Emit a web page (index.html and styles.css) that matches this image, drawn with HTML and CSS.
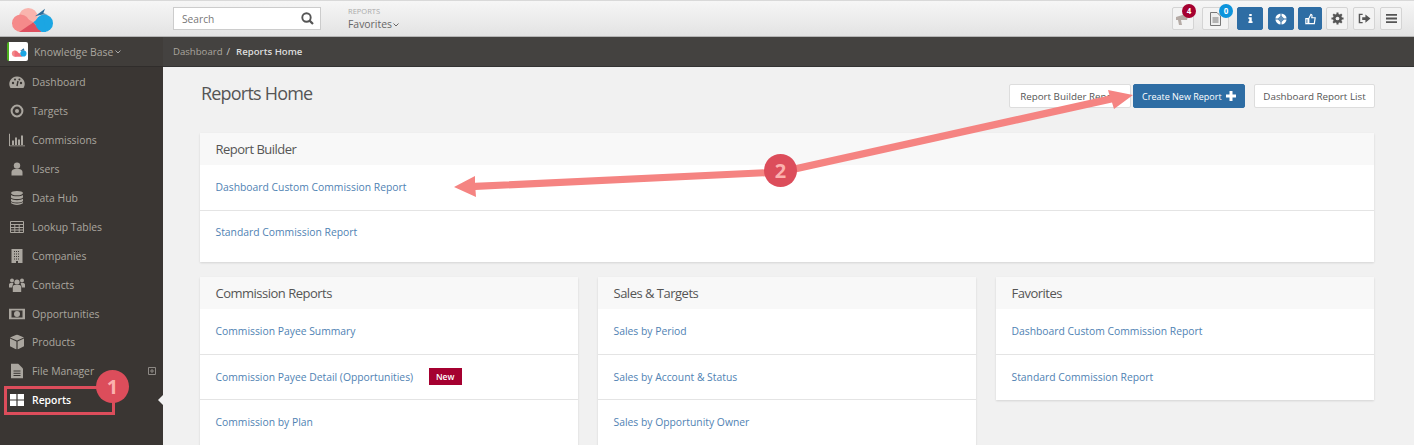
FILE: index.html
```html
<!DOCTYPE html>
<html lang="en">
<head>
  <meta charset="UTF-8" />
  <meta name="viewport" content="width=device-width, initial-scale=1.0"/>
  <title>Reports Home</title>
  <link rel="stylesheet" href="styles.css">
</head>
<body>

<!-- Top bar -->
<header class="topbar">
  <div class="logo-wrap">
    <svg class="logo" width="44" height="28" viewBox="0 0 44 28">
      <circle cx="18.3" cy="12.2" r="9.3" fill="#f9b4ad"/>
      <circle cx="10.7" cy="18.2" r="8.7" fill="#f58a8a"/>
      <path d="M10 9.5 L23.3 17.2 L9.3 27Z" fill="#f58a8a"/>
      <path d="M9.3 27 L23.3 17.2 L31.7 27Z" fill="#dd5060"/>
      <circle cx="34.3" cy="18.2" r="8.7" fill="#1ba6e3"/>
      <path d="M23.3 17.2 L33 9.5 L36 27 L31.7 27Z" fill="#1ba6e3"/>
      <path d="M25 11.2 L35 3.8 L33.3 8.2 L37.7 9.5 L32.7 9.5Z" fill="#2a6d9c"/>
    </svg>
  </div>
  <div class="search-box">
    <span class="search-text">Search</span>
    <svg width="13" height="13" viewBox="0 0 13 13"><circle cx="5.5" cy="5.5" r="4.2" fill="none" stroke="#555" stroke-width="1.9"/><path d="M8.6 8.6 L12 12" stroke="#555" stroke-width="2.2"/></svg>
  </div>
  <div class="fav-menu">
    <div class="fav-label">REPORTS</div>
    <div class="fav-value">Favorites<svg class="caret" width="6" height="4" viewBox="0 0 6 4"><path d="M0.5 0.5 L3 3 L5.5 0.5" fill="none" stroke="#666" stroke-width="1"/></svg></div>
  </div>
  <div class="top-actions">
    <span class="tool tool-bell">
      <svg width="16" height="14" viewBox="0 0 16 14"><path d="M1 5 L14 1 L12 8 L6 8 L7 13 L4 13 L3 8 L1 8Z" fill="#b5aba6"/></svg>
      <b class="count count-red">4</b>
    </span>
    <span class="tool tool-doc">
      <svg width="11" height="14" viewBox="0 0 11 14"><path d="M0.5 0.5 H7 L10.5 4 V13.5 H0.5Z" fill="#eee" stroke="#777"/><path d="M2.5 6 H8.5 M2.5 8 H8.5 M2.5 10 H8.5" stroke="#777"/></svg>
      <b class="count count-blue">0</b>
    </span>
    <span class="tool tool-blue">
      <svg width="5" height="9" viewBox="0 0 6 11"><path d="M1.5 0 H4.5 V2.5 H1.5Z M0.5 4 H4.5 V9 H5.5 V11 H0.5 V9 H1.5 V6 H0.5Z" fill="#fff"/></svg>
    </span>
    <span class="tool tool-blue">
      <svg width="12" height="12" viewBox="0 0 12 12"><circle cx="6" cy="6" r="5.6" fill="#fff"/><path d="M6 0 V12 M0 6 H12" stroke="#2e6da4" stroke-width="1"/><circle cx="6" cy="6" r="2.2" fill="none" stroke="#2e6da4"/></svg>
    </span>
    <span class="tool tool-blue tool-thumb">
      <svg width="11" height="12" viewBox="0 0 13 13"><path d="M1 6 H3.5 V12 H1Z M4.5 6 L7 1 C8.5 1 8.5 3 8 5 H12 L11 12 H4.5Z" fill="none" stroke="#fff" stroke-width="1.4"/></svg>
    </span>
    <span class="tool tool-sq">
      <svg width="13" height="13" viewBox="0 0 14 14"><circle cx="7" cy="7" r="3.6" fill="none" stroke="#555" stroke-width="2.6"/><path d="M7 0.5 V13.5 M0.5 7 H13.5 M2.4 2.4 L11.6 11.6 M11.6 2.4 L2.4 11.6" stroke="#555" stroke-width="2.2"/><circle cx="7" cy="7" r="2" fill="#eee"/></svg>
    </span>
    <span class="tool tool-sq">
      <svg width="13" height="11" viewBox="0 0 14 12"><path d="M5 1.5 H1.5 V10.5 H5" fill="none" stroke="#555" stroke-width="1.6"/><path d="M4.5 4.5 H8 V1.5 L13.5 6 L8 10.5 V7.5 H4.5Z" fill="#555"/></svg>
    </span>
    <span class="tool tool-sq">
      <svg width="13" height="11" viewBox="0 0 14 12"><path d="M1 2 H13 M1 6 H13 M1 10 H13" stroke="#555" stroke-width="2"/></svg>
    </span>
  </div>
</header>

<div class="layout">

  <!-- Sidebar -->
  <aside class="sidebar">
    <div class="kb-row">
      <span class="kb-logo">
        <svg width="16" height="10" viewBox="0 0 44 28"><circle cx="10.7" cy="18.2" r="8.7" fill="#f58a8a"/><path d="M10 9.5 L23.3 17.2 L31.7 27 L9.3 27Z" fill="#ee6d78"/><circle cx="34.3" cy="18.2" r="8.7" fill="#1ba6e3"/><path d="M25 11.2 L35 3.8 L37.7 9.5Z" fill="#2a6d9c"/></svg>
      </span>
      <span class="kb-name">Knowledge Base</span>
      <svg class="caret" width="6" height="4" viewBox="0 0 6 4"><path d="M0.5 0.5 L3 3 L5.5 0.5" fill="none" stroke="#aaa" stroke-width="1"/></svg>
    </div>
    <nav class="side-nav">
      <a class="nav-item"><svg width="16" height="14" viewBox="0 0 16 14"><path d="M8 1.5 A7.5 7.5 0 0 0 1.5 13 H14.5 A7.5 7.5 0 0 0 8 1.5Z" fill="#aaa69f"/><circle cx="4" cy="8" r="1.2" fill="#3a3633"/><circle cx="12" cy="8" r="1.2" fill="#3a3633"/><circle cx="6" cy="4.6" r="1" fill="#3a3633"/><circle cx="10.4" cy="4.6" r="1" fill="#3a3633"/><path d="M8 11 L9 6" stroke="#3a3633" stroke-width="1.4"/></svg>Dashboard</a>
      <a class="nav-item"><svg width="14" height="14" viewBox="0 0 14 14"><circle cx="7" cy="7" r="5.4" fill="none" stroke="#aaa69f" stroke-width="2"/><circle cx="7" cy="7" r="2" fill="#aaa69f"/></svg>Targets</a>
      <a class="nav-item"><svg width="16" height="13" viewBox="0 0 16 13"><path d="M0.5 0 V12.5 H16" fill="none" stroke="#aaa69f"/><path d="M3 7 H5 V11.5 H3Z M6 4 H8 V11.5 H6Z M9 6 H11 V11.5 H9Z M12 2 H14 V11.5 H12Z" fill="#aaa69f"/></svg>Commissions</a>
      <a class="nav-item"><svg width="12" height="14" viewBox="0 0 12 14"><circle cx="6" cy="3.6" r="3.2" fill="#aaa69f"/><path d="M0.5 13.5 V10 C0.5 8 2.5 7 4 7 H8 C9.5 7 11.5 8 11.5 10 V13.5Z" fill="#aaa69f"/></svg>Users</a>
      <a class="nav-item"><svg width="13" height="15" viewBox="0 0 13 15"><ellipse cx="6.5" cy="2.6" rx="6" ry="2.2" fill="#aaa69f"/><path d="M0.5 4.4 C2 6.3 11 6.3 12.5 4.4 V7 C11 9 2 9 0.5 7Z M0.5 8.2 C2 10.1 11 10.1 12.5 8.2 V10.6 C11 12.6 2 12.6 0.5 10.6Z M0.5 11.6 C2 13.4 11 13.4 12.5 11.6 V12.6 C11 15 2 15 0.5 12.6Z" fill="#aaa69f"/></svg>Data Hub</a>
      <a class="nav-item"><svg width="14" height="12" viewBox="0 0 14 12"><path d="M0.5 0.5 H13.5 V11.5 H0.5Z M0.5 3.5 H13.5 M0.5 6.5 H13.5 M0.5 9 H13.5 M4.8 3 V11.5 M9.2 3 V11.5" fill="none" stroke="#aaa69f"/></svg>Lookup Tables</a>
      <a class="nav-item"><svg width="12" height="14" viewBox="0 0 12 14"><path d="M0.5 0 H11.5 V14 H7 V12 H5 V14 H0.5Z" fill="#aaa69f"/><path d="M3 2.5 H9 M3 5 H9 M3 7.5 H9 M3 10 H9" stroke="#3a3633" stroke-dasharray="1 1"/></svg>Companies</a>
      <a class="nav-item"><svg width="16" height="14" viewBox="0 0 16 14"><circle cx="8" cy="4" r="2.6" fill="#aaa69f"/><circle cx="3" cy="2.6" r="2" fill="#aaa69f"/><circle cx="13" cy="2.6" r="2" fill="#aaa69f"/><path d="M3.8 14 V9 C3.8 7.5 5 7 6 7 H10 C11 7 12.2 7.5 12.2 9 V14Z M0 9.5 V6.5 C0 5.5 1 5 2 5 H4.4 L3 9.5Z M16 9.5 V6.5 C16 5.5 15 5 14 5 H11.6 L13 9.5Z" fill="#aaa69f"/></svg>Contacts</a>
      <a class="nav-item"><svg width="16" height="11" viewBox="0 0 16 11"><path d="M0 0 H16 V11 H0Z" fill="#aaa69f"/><path d="M2.5 2 H13.5 V9 H2.5Z" fill="#3a3633"/><circle cx="8" cy="5.5" r="3" fill="#aaa69f"/></svg>Opportunities</a>
      <a class="nav-item"><svg width="14" height="15" viewBox="0 0 14 15"><path d="M7 0 L14 3 L7 6 L0 3Z M0 4 L6.4 7 V15 L0 11.8Z M14 4 L7.6 7 V15 L14 11.8Z" fill="#aaa69f"/></svg>Products</a>
      <a class="nav-item nav-files"><svg width="12" height="15" viewBox="0 0 12 15"><path d="M0 0 H7 L12 5 V15 H0Z" fill="#aaa69f"/><path d="M2.5 7.5 H9.5 M2.5 9.8 H9.5 M2.5 12 H9.5" stroke="#3a3633"/></svg>File Manager
        <svg class="expand" width="8" height="8" viewBox="0 0 8 8"><path d="M0.5 0.5 H7.5 V7.5 H0.5Z M2 4 H6 M4 2 V6" fill="none" stroke="#8d8985"/></svg>
      </a>
      <a class="nav-item nav-active"><svg width="14" height="12" viewBox="0 0 14 12"><path d="M0 0 H6.4 V5.4 H0Z M7.6 0 H14 V5.4 H7.6Z M0 6.6 H6.4 V12 H0Z M7.6 6.6 H14 V12 H7.6Z" fill="#fff"/></svg>Reports</a>
    </nav>
  </aside>

  <div class="main">
    <div class="crumbs"><span class="crumb-link">Dashboard</span><span class="crumb-sep">/</span><span class="crumb-now">Reports Home</span></div>

    <main class="content">
      <div class="title-row">
        <h1 class="page-title">Reports Home</h1>
        <div class="title-actions">
          <button class="btn btn-plain btn-builder">Report Builder Report</button>
          <button class="btn btn-blue">Create New Report
            <svg width="10" height="10" viewBox="0 0 10 10"><path d="M5 0 V10 M0 5 H10" stroke="#fff" stroke-width="3"/></svg>
          </button>
          <button class="btn btn-plain btn-list">Dashboard Report List</button>
        </div>
      </div>

      <section class="panel panel-full">
        <h2 class="panel-head">Report Builder</h2>
        <a class="panel-row">Dashboard Custom Commission Report</a>
        <a class="panel-row row-tall">Standard Commission Report</a>
      </section>

      <div class="panel-grid">
        <section class="panel">
          <h2 class="panel-head">Commission Reports</h2>
          <a class="panel-row">Commission Payee Summary</a>
          <a class="panel-row">Commission Payee Detail (Opportunities)<span class="tag-new">New</span></a>
          <a class="panel-row">Commission by Plan</a>
        </section>
        <section class="panel">
          <h2 class="panel-head">Sales &amp; Targets</h2>
          <a class="panel-row">Sales by Period</a>
          <a class="panel-row">Sales by Account &amp; Status</a>
          <a class="panel-row">Sales by Opportunity Owner</a>
        </section>
        <section class="panel panel-short">
          <h2 class="panel-head">Favorites</h2>
          <a class="panel-row">Dashboard Custom Commission Report</a>
          <a class="panel-row">Standard Commission Report</a>
        </section>
      </div>
    </main>
  </div>
</div>

<!-- Tutorial annotations drawn over the page -->
<svg class="arrows" width="1414" height="445" viewBox="0 0 1414 445">
  <g fill="#f58482">
    <path d="M781 168.5 L475 182.8 L475 176 L454 187 L476 197 L475.5 190 L781 175.5Z"/>
    <path d="M780 168.5 L1109.5 95.5 L1108 90 L1133 95 L1114 109 L1112 102.5 L782 175.5Z"/>
  </g>
</svg>
<div class="reports-outline"></div>
<div class="step step-one">1</div>
<div class="step step-two">2</div>
<div class="nav-notch"></div>

</body>
</html>
```

FILE: styles.css
```css
* {
  box-sizing: border-box;
}

html, body {
  height: 100%;
}

body {
  margin: 0;
  font-family: 'Open Sans', sans-serif;
  font-size: 11px;
  background: #f1f1f1;
  color: #555;
  overflow: hidden;
}

.topbar {
  height: 37px;
  display: flex;
  align-items: center;
  background: linear-gradient(#f6f6f6, #e3e3e3);
  border-top: 1px solid #d9d9d9;
  border-bottom: 1px solid #b5b5b5;
}

.logo-wrap {
  width: 173px;
  padding-left: 10px;
  display: flex;
  align-items: center;
}

.search-box {
  width: 148px;
  height: 23px;
  display: flex;
  align-items: center;
  justify-content: space-between;
  padding: 0 6px 0 8px;
  background: #fff;
  border: 1px solid #ccc;
}

.search-text {
  color: #777;
  font-size: 10.2px;
}

.fav-menu {
  margin-left: 27px;
  color: #666;
}

.fav-label {
  font-size: 7.5px;
  line-height: 10px;
  color: #aaa;
}

.fav-value {
  margin-top: 1px;
  font-size: 10.4px;
  line-height: 15px;
}

.caret {
  margin-left: 1px;
  vertical-align: 1px;
}

.top-actions {
  margin-left: auto;
  padding-right: 12px;
  display: flex;
  align-items: center;
  gap: 5px;
}

.tool {
  position: relative;
  height: 23px;
  display: flex;
  align-items: center;
  justify-content: center;
  background: #f3f3f3;
  border: 1px solid #d4d4d4;
  border-radius: 2px;
}

.tool-bell {
  width: 22px;
  margin-right: 3px;
}

.tool-doc {
  width: 27px;
  margin-right: 3px;
}

.tool-blue {
  width: 26px;
  background: #2e6da4;
  border-color: #2e6da4;
}

.tool-thumb {
  width: 24px;
  margin: 0 -1px;
}

.tool-sq {
  width: 22px;
}

.count {
  position: absolute;
  top: -4px;
  right: -4px;
  width: 14px;
  height: 14px;
  border-radius: 50%;
  color: #fff;
  font-size: 8px;
  line-height: 14px;
  text-align: center;
}

.tool-bell .count {
  right: -3px;
}

.tool-doc .count {
  right: -5px;
}

.count-red {
  background: #a50030;
}

.count-blue {
  background: #0d94dc;
}

.layout {
  display: flex;
  height: 408px;
}

.sidebar {
  width: 163px;
  flex: none;
  background: #3a3633;
}

.kb-row {
  height: 30px;
  display: flex;
  align-items: center;
  padding-left: 7px;
  background: #403d3a;
  border-bottom: 1px solid #302d2b;
  color: #aaa69f;
  font-size: 10.4px;
}

.kb-logo {
  width: 21px;
  height: 19px;
  display: flex;
  align-items: center;
  justify-content: center;
  background: #fff;
  border-left: 2px solid #4caf1e;
  border-radius: 2px;
  margin-right: 6px;
}

.kb-name {
  margin-right: 1px;
}

.side-nav {
  display: flex;
  flex-direction: column;
  padding-top: 1px;
}

.nav-item {
  position: relative;
  height: 28.9px;
  display: flex;
  align-items: center;
  padding-left: 32px;
  color: #aaa69f;
  font-size: 10.4px;
}

.nav-item > svg:first-child {
  position: absolute;
  left: 17px;
  top: 50%;
  transform: translate(-50%, -50%);
}

.nav-active {
  color: #fff;
  font-weight: 600;
}

.expand {
  position: absolute;
  left: 148px;
  top: 10px;
}

.main {
  flex: 1;
  min-width: 0;
}

.crumbs {
  height: 30px;
  display: flex;
  align-items: center;
  padding-left: 10px;
  background: #444240;
  border-bottom: 1px solid #333;
  color: #aaa69f;
  font-size: 9.6px;
}

.crumb-sep {
  margin: 0 6px 0 4px;
  color: #ccc;
}

.crumb-now {
  color: #ddd;
  font-weight: 600;
}

.content {
  padding: 16px 40px 0 37px;
}

.title-row {
  height: 50px;
  display: flex;
  justify-content: space-between;
}

.page-title {
  margin: 0;
  color: #555;
  font-size: 18px;
  font-weight: 400;
  letter-spacing: -0.8px;
  line-height: 20px;
  padding-left: 1px;
}

.title-actions {
  display: flex;
  align-items: flex-start;
  margin: 1px -1px 0 0;
}

.btn {
  height: 24px;
  font-family: inherit;
  font-size: 9.8px;
  padding: 0;
  border-radius: 2px;
}

.btn-plain {
  background: #fff;
  border: 1px solid #ddd;
  color: #555;
}

.btn-builder {
  width: 122px;
  margin-right: 2px;
  white-space: nowrap;
  overflow: hidden;
}

.btn-list {
  width: 121px;
  margin-left: 9px;
}

.btn-blue {
  width: 112px;
  background: #2e6da4;
  border: 1px solid #2e6da4;
  color: #fff;
  font-size: 9px;
}

.btn-blue svg {
  margin-left: 2px;
  vertical-align: -1px;
}

.panel {
  background: #fff;
  box-shadow: 0 1px 2px rgba(0, 0, 0, 0.12);
}

.panel-full {
  margin-bottom: 15px;
}

.panel-short {
  align-self: start;
}

.panel-head {
  margin: 0;
  height: 32px;
  padding-left: 15.5px;
  background: #f8f8f8;
  color: #555;
  font-size: 13px;
  font-weight: 400;
  letter-spacing: -0.5px;
  line-height: 32px;
}

.panel-row {
  height: 45.5px;
  display: flex;
  align-items: center;
  padding-left: 15.5px;
  color: #4f82b3;
  font-size: 10.35px;
  border-bottom: 1px solid #e4e4e4;
}

.panel-row:last-child {
  border-bottom-color: transparent;
}

.row-tall {
  height: 51.5px;
  padding-bottom: 7px;
}

.panel-grid {
  display: grid;
  grid-template-columns: repeat(3, 378px);
  gap: 20px;
}

.tag-new {
  margin-left: 15.5px;
  width: 33px;
  height: 17px;
  background: #a50030;
  color: #fff;
  font-size: 8.5px;
  font-weight: 600;
  line-height: 17px;
  text-align: center;
}

/* annotations */
.arrows {
  position: absolute;
  left: 0;
  top: 0;
}

.reports-outline {
  position: absolute;
  left: 4px;
  top: 386px;
  width: 111px;
  height: 29px;
  border: 3px solid #dc4d5b;
}

.step {
  position: absolute;
  width: 33px;
  height: 33px;
  border-radius: 50%;
  background: #dc4d5b;
  color: #fbb1ae;
  font-size: 20px;
  font-weight: 700;
  line-height: 33px;
  text-align: center;
}

.step-one {
  left: 96px;
  top: 370px;
}

.step-two {
  left: 764px;
  top: 154px;
}

.nav-notch {
  position: absolute;
  left: 158px;
  top: 395px;
  width: 0;
  height: 0;
  border: 5px solid transparent;
  border-left: 0;
  border-right-color: #f1f1f1;
}
```
